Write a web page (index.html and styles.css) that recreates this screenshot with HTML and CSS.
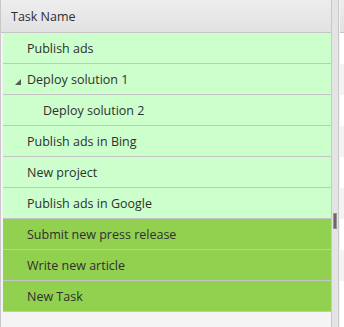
FILE: index.html
```html
<!DOCTYPE html>
<html>
<head>
<meta charset="utf-8">
<link rel="stylesheet" href="styles.css">
</head>
<body>
<div class="gantt">
  <div class="list">
    <div class="hdr">Task Name</div>
    <div class="rows">
      <div class="row light"><span class="text">Publish ads</span></div>
      <div class="row light"><span class="toggle"></span><span class="text">Deploy solution 1</span></div>
      <div class="row light"><span class="text lvl2">Deploy solution 2</span></div>
      <div class="row light"><span class="text">Publish ads in Bing</span></div>
      <div class="row light"><span class="text">New project</span></div>
      <div class="row light"><span class="text">Publish ads in Google</span></div>
      <div class="row dark"><span class="text">Submit new press release</span></div>
      <div class="row dark"><span class="text">Write new article</span></div>
      <div class="row dark"><span class="text">New Task</span></div>
    </div>
  </div>
  <div class="splitter"><div class="handle"></div></div>
  <div class="timeline">
    <div class="thdr"></div>
    <div class="trow"></div>
    <div class="trow alt"></div>
    <div class="trow"></div>
    <div class="trow alt"></div>
    <div class="trow"></div>
    <div class="trow alt"></div>
    <div class="trow"></div>
    <div class="trow alt"></div>
    <div class="trow"></div>
  </div>
</div>
</body>
</html>
```
FILE: styles.css
```css
html, body {
  margin: 0;
  padding: 0;
  background: #ffffff;
}
.gantt {
  display: flex;
  width: 344px;
  height: 327px;
  overflow: hidden;
  font-family: "Open Sans", sans-serif;
  font-size: 12.5px;
  color: #2f2f2f;
}
.list {
  width: 330px;
  flex: none;
  border-left: 1px solid #c8c8c8;
  background: #f4f4f4;
  display: flex;
  flex-direction: column;
}
.hdr {
  height: 32px;
  border-bottom: 1px solid #c5c5c5;
  background: linear-gradient(#ededed, #e2e2e2);
  display: flex;
  align-items: center;
  padding-left: 10px;
}
.rows {
  display: flex;
  flex-direction: column;
  margin-left: 2px;
}
.row {
  height: 30px;
  border-bottom: 1px solid #c5c5c5;
  display: flex;
  align-items: center;
  padding-left: 24px;
  position: relative;
}
.row.light { background: #ccffcc; }
.row.dark { background: #92d050; }
.lvl2 { padding-left: 16px; }
.toggle {
  position: absolute;
  left: 12px;
  top: 15px;
  width: 0;
  height: 0;
  border-left: 6px solid transparent;
  border-bottom: 6px solid #595959;
}
.splitter {
  width: 6px;
  flex: none;
  background: #e4e4e4;
  border-left: 1px solid #c8c8c8;
  border-right: 1px solid #c8c8c8;
  position: relative;
}
.handle {
  position: absolute;
  left: 1px;
  top: 213px;
  height: 16px;
  background: #6e6868;
  border: 1px solid #9a9595;
  box-sizing: border-box;
  width: 4px;
}
.timeline {
  flex: 1;
  display: flex;
  flex-direction: column;
  border-left: 1px solid #f4f4f4;
}
.thdr {
  height: 32px;
  border-bottom: 1px solid #c5c5c5;
  background: linear-gradient(#ededed, #e2e2e2);
}
.trow {
  height: 31px;
  background: #ffffff;
}
.trow.alt { background: #f3f3f3; }
```
